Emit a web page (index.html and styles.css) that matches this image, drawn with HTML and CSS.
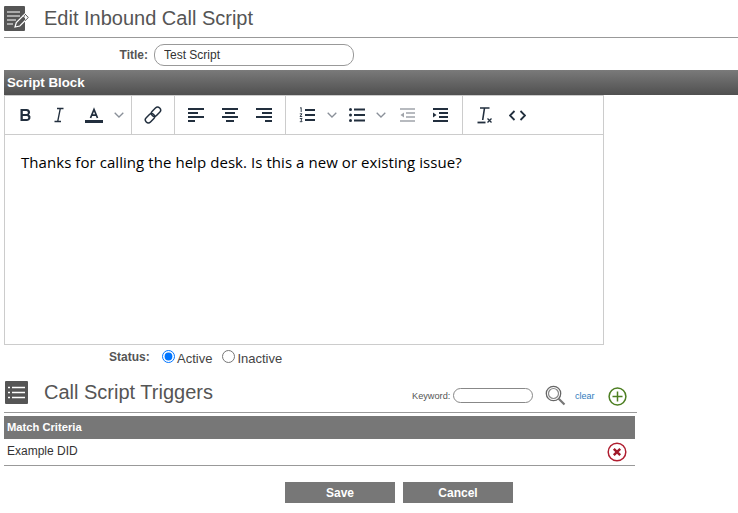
FILE: index.html
```html
<!DOCTYPE html>
<html lang="en">
<head>
<meta charset="utf-8">
<title>Edit Inbound Call Script</title>
<link rel="stylesheet" href="styles.css">
</head>
<body>
<header class="page-head">
  <svg class="head-icon" viewBox="0 0 26 25" width="26" height="25">
    <rect width="21" height="25" rx="1" fill="#555"/>
    <path d="M3 6h13M3 10h13M3 14h9M3 18h6" stroke="#fff" stroke-width="1.200" fill="none"/>
    <path d="M11 21l1.300-4.500 8.500-8.500 3.500 3.500-8.500 8.500z" fill="#555" stroke="#fff" stroke-width="1.200"/>
    <path d="M21 8l3.300 3.500-3.300 3.200" fill="#fff" stroke="#555" stroke-width="1"/>
    <path d="M19 9.500l3.300 3.500" stroke="#fff" stroke-width="1"/>
  </svg>
  <h1 class="head-title">Edit Inbound Call Script</h1>
</header>
<div class="title-row">
  <label class="field-label">Title:</label>
  <input class="title-input" type="text" value="Test Script">
</div>
<div class="bar-gradient">Script Block</div>
<section class="editor">
  <div class="toolbar">
    <div class="tool-group group-text">
      <span class="tool"><svg width="16" height="16" viewBox="0 0 16 16"><path d="M2.500 2h6.300a3.200 3.200 0 0 1 2.200 5.600 3.500 3.500 0 0 1-2 6.400H2.500zM4.800 4v3h3.600a1.500 1.500 0 0 0 0-3zM4.800 9v3h4a1.500 1.500 0 0 0 0-3z" fill="#222f3e" fill-rule="evenodd"/></svg></span>
      <span class="tool"><svg width="16" height="16" viewBox="0 0 16 16"><path d="M6 1.500h6.500M3.500 14.500H10M9.300 1.500L6.700 14.500" stroke="#222f3e" stroke-width="1.300" fill="none"/></svg></span>
      <span class="tool"><svg width="18" height="18" viewBox="0 0 18 18"><path d="M5.500 12L9 3.500 12.500 12M6.700 9.200h4.600" stroke="#222f3e" stroke-width="1.700" fill="none"/><rect y="14" width="18" height="3" fill="#222f3e"/></svg></span>
      <span class="chev chev-text"><svg width="10" height="6" viewBox="0 0 10 6"><path d="M.7.700L5 5l4.300-4.300" stroke="#8a9099" stroke-width="1.300" fill="none"/></svg></span>
    </div>
    <div class="tool-group group-link">
      <svg width="20" height="20" viewBox="0 0 20 20"><g fill="none" stroke="#222f3e" stroke-width="1.500"><rect x="10" y="1.500" width="6" height="10.500" rx="3" transform="rotate(45 13 6.700)"/><rect x="4" y="8" width="6" height="10.500" rx="3" transform="rotate(45 7 13.200)"/></g></svg>
    </div>
    <div class="tool-group group-align">
      <svg width="16" height="14" viewBox="0 0 16 14"><path d="M0 1h16M0 5h10M0 9h16M0 13h7" stroke="#222f3e" stroke-width="1.800"/></svg>
      <svg width="16" height="14" viewBox="0 0 16 14"><path d="M0 1h16M3 5h10M0 9h16M4 13h8" stroke="#222f3e" stroke-width="1.800"/></svg>
      <svg width="16" height="14" viewBox="0 0 16 14"><path d="M0 1h16M6 5h10M0 9h16M9 13h7" stroke="#222f3e" stroke-width="1.800"/></svg>
    </div>
    <div class="tool-group group-list">
      <svg class="list-a" width="16" height="16" viewBox="0 0 16 16"><path d="M6 3h10M6 8h10M6 13h10" stroke="#222f3e" stroke-width="1.800"/><path d="M1 1.200l1.200-.7V5M.8 6.800h2.200L1 9.500h2.200M.8 11.500h2.300L2 13l1.100 1.700H.8" stroke="#222f3e" stroke-width=".9" fill="none"/></svg>
      <span class="chev chev-list"><svg width="10" height="6" viewBox="0 0 10 6"><path d="M.7.700L5 5l4.300-4.300" stroke="#8a9099" stroke-width="1.300" fill="none"/></svg></span>
      <svg class="list-b" width="16" height="14" viewBox="0 0 16 14"><path d="M5 1.500h11M5 7h11M5 12.500h11" stroke="#222f3e" stroke-width="1.800"/><circle cx="1.500" cy="1.500" r="1.500" fill="#222f3e"/><circle cx="1.500" cy="7" r="1.500" fill="#222f3e"/><circle cx="1.500" cy="12.500" r="1.500" fill="#222f3e"/></svg>
      <span class="chev chev-list2"><svg width="10" height="6" viewBox="0 0 10 6"><path d="M.7.700L5 5l4.300-4.300" stroke="#8a9099" stroke-width="1.300" fill="none"/></svg></span>
      <svg class="outdent" width="16" height="14" viewBox="0 0 16 14"><path d="M1 1h15M7 5h9M7 9h9M1 13h15" stroke="#a0a4aa" stroke-width="1.600"/><path d="M5 4.500L1.500 7 5 9.500z" fill="#a0a4aa"/></svg>
      <svg class="indent" width="16" height="14" viewBox="0 0 16 14"><path d="M1 1h15M7 5h9M7 9h9M1 13h15" stroke="#222f3e" stroke-width="1.800"/><path d="M1 4.500L4.500 7 1 9.500z" fill="#222f3e"/></svg>
    </div>
    <div class="tool-group group-last">
      <svg width="18" height="18" viewBox="0 0 18 18"><path d="M4 2h9.500M8.500 2L6.700 14" stroke="#222f3e" stroke-width="1.600" fill="none"/><path d="M1.500 16.500h8" stroke="#222f3e" stroke-width="1.800"/><path d="M11.500 12.500l4 4M15.500 12.500l-4 4" stroke="#222f3e" stroke-width="1.300"/></svg>
      <svg class="code" width="17" height="11" viewBox="0 0 17 11"><path d="M5.500 1L1 5.500 5.500 10M11.500 1L16 5.500 11.500 10" stroke="#222f3e" stroke-width="1.800" fill="none"/></svg>
    </div>
  </div>
  <div class="editor-body">Thanks for calling the help desk. Is this a new or existing issue?</div>
</section>
<div class="status-row">
  <span class="status-label">Status:</span>
  <label class="radio"><input type="radio" name="status" checked>Active</label>
  <label class="radio radio-second"><input type="radio" name="status">Inactive</label>
</div>
<section class="triggers">
  <div class="trigger-head">
    <svg class="list-icon" viewBox="0 0 23 23" width="23" height="23">
      <rect width="23" height="23" rx="1" fill="#555"/>
      <path d="M7 6.500h13M7 11.500h13M7 16.500h13" stroke="#fff" stroke-width="1.600"/>
      <path d="M3 6.500h2M3 11.500h2M3 16.500h2" stroke="#fff" stroke-width="1.600"/>
    </svg>
    <h2 class="trigger-title">Call Script Triggers</h2>
    <div class="trigger-tools">
      <label class="keyword">Keyword:</label>
      <input class="keyword-input" type="text">
      <svg class="search" width="21" height="21" viewBox="0 0 21 21"><circle cx="8.500" cy="8.500" r="7.200" fill="none" stroke="#666" stroke-width="1.300"/><circle cx="8.500" cy="8.500" r="5" fill="none" stroke="#888" stroke-width="1.200"/><path d="M13.500 13.500l6 6" stroke="#777" stroke-width="2.200"/></svg>
      <a class="clear" href="#">clear</a>
      <svg class="add" width="19" height="19" viewBox="0 0 19 19"><circle cx="9.500" cy="9.500" r="8.400" fill="none" stroke="#4d7f22" stroke-width="1.500"/><path d="M9.500 4.500v10M4.500 9.500h10" stroke="#4d7f22" stroke-width="1.500"/></svg>
    </div>
  </div>
  <div class="table-head">Match Criteria</div>
  <div class="table-row">
    <span class="row-text">Example DID</span>
    <svg width="20" height="20" viewBox="0 0 20 20"><circle cx="10" cy="10" r="8.800" fill="none" stroke="#b01e30" stroke-width="1.500"/><path d="M6.800 6.800l6.400 6.400M13.200 6.800l-6.400 6.400" stroke="#a01828" stroke-width="2.400"/></svg>
  </div>
</section>
<div class="actions">
  <button class="btn btn-save" type="button">Save</button>
  <button class="btn btn-cancel" type="button">Cancel</button>
</div>
</body>
</html>
```
FILE: styles.css
```css
* { box-sizing: border-box; }
html, body { margin: 0; padding: 0; }
body {
  width: 738px;
  height: 513px;
  overflow: hidden;
  background: #fff;
  font-family: "Liberation Sans", Arial, sans-serif;
  color: #333;
}
.page-head {
  display: flex;
  align-items: center;
  height: 38px;
  margin-left: 4px;
  padding-bottom: 1px;
  border-bottom: 1px solid #999;
}
.head-icon { flex: none; }
.head-title {
  margin: 0 0 0 14px;
  font-size: 20px;
  font-weight: 400;
  color: #555;
}
.title-row {
  display: flex;
  align-items: center;
  height: 32px;
  padding-top: 1px;
}
.field-label {
  width: 148px;
  text-align: right;
  font-size: 12px;
  font-weight: 700;
  color: #555;
}
.title-input {
  width: 200px;
  height: 22px;
  margin-left: 6px;
  padding: 0 9px;
  border: 1px solid #999;
  border-radius: 10px;
  font: 12px "Liberation Sans", Arial, sans-serif;
  color: #333;
  outline: none;
}
.bar-gradient {
  height: 25px;
  margin-left: 4px;
  padding: 5px 3px 0;
  background: linear-gradient(#7a7a7a, #505050);
  color: #fff;
  font-size: 13.3px;
  font-weight: 700;
}
.editor {
  width: 600px;
  height: 250px;
  margin-left: 4px;
  border: 1px solid #ccc;
}
.toolbar {
  display: flex;
  height: 39px;
  border-bottom: 1px solid #ccc;
}
.tool-group {
  display: flex;
  align-items: center;
  height: 38px;
  border-right: 1px solid #ccc;
}
.group-text { width: 127px; padding-left: 13px; }
.tool { display: flex; width: 33px; }
.tool:nth-child(3) { width: 26px; margin-left: 1px; }
.chev { display: flex; }
.chev-text { margin-left: 3px; }
.group-link { width: 43px; justify-content: center; }
.group-align { width: 111px; padding-left: 13px; gap: 18px; }
.group-list { width: 177px; padding-left: 13px; }
.chev-list { margin-left: 12px; }
.list-b { margin-left: 12px; }
.chev-list2 { margin-left: 11px; }
.outdent { margin-left: 13px; }
.indent { margin-left: 17px; }
.group-last { border-right: 0; padding-left: 13px; gap: 15px; }
.editor-body {
  padding: 17px 16px 0;
  font-family: "Open Sans", "Noto Sans", sans-serif;
  font-size: 15px;
  letter-spacing: .06px;
  line-height: 20px;
  color: #000;
}
.status-row {
  display: flex;
  align-items: center;
  height: 26px;
  padding-left: 109px;
  font-size: 13px;
  color: #444;
}
.status-label {
  width: 53px;
  margin-top: -2px;
  font-size: 12px;
  font-weight: 700;
  color: #555;
}
.radio { display: flex; align-items: center; height: 16px; margin-top: 1px; }
.radio input { width: 13px; height: 13px; margin: -4px 2px 0 0; }
.radio-second { margin-left: 10px; }
.triggers { width: 633px; margin-left: 4px; }
.trigger-head {
  display: flex;
  align-items: center;
  height: 42px;
  padding: 2px 0 0 1px;
  border-bottom: 1px solid #999;
}
.list-icon { flex: none; }
.trigger-title {
  width: 368px;
  margin: 0 0 0 16px;
  font-size: 20px;
  font-weight: 400;
  color: #555;
}
.trigger-tools {
  display: flex;
  align-items: center;
  margin-top: 6px;
}
.keyword { width: 40px; font-size: 9.2px; color: #555; }
.keyword-input {
  width: 80px;
  height: 15px;
  margin-left: 1px;
  border: 1px solid #888;
  border-radius: 8px;
  outline: none;
}
.search { margin-left: 12px; }
.clear {
  margin-left: 9px;
  font-size: 9px;
  color: #2f7bbd;
  text-decoration: none;
}
.add { margin: 2px 0 0 13px; }
.table-head {
  width: 631px;
  height: 23px;
  margin-top: 3px;
  padding: 5px 3px 0;
  background: #777;
  color: #fff;
  font-size: 11.2px;
  font-weight: 700;
}
.table-row {
  display: flex;
  justify-content: space-between;
  align-items: center;
  width: 631px;
  height: 27px;
  padding: 0 8px 0 3px;
  border-bottom: 1px solid #999;
  font-size: 12px;
  color: #333;
}
.row-text { margin-top: -2px; }
.actions {
  display: flex;
  gap: 8px;
  padding: 16px 0 0 285px;
}
.btn {
  height: 21px;
  padding: 0;
  border: 0;
  background: #777;
  color: #fff;
  font: 700 12px "Liberation Sans", Arial, sans-serif;
}
.btn-save { width: 110px; }
.btn-cancel { width: 110px; }
```
